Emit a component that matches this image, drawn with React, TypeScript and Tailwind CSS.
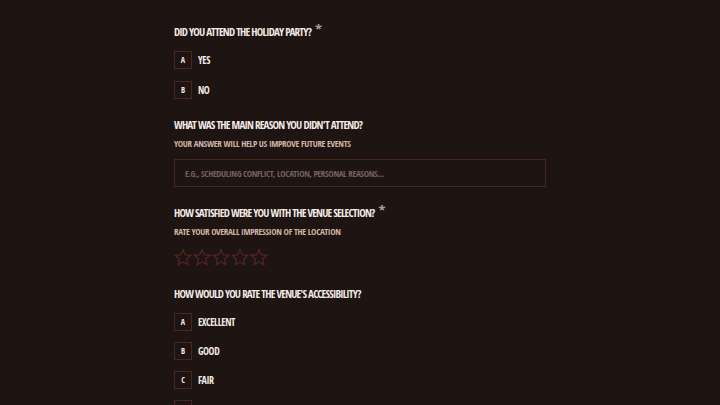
const FONT = { fontFamily: "'Open Sans Condensed', 'Roboto Condensed', 'DejaVu Sans Condensed', sans-serif" };

type Choice = { key: string; label: string };

function Heading({ children, required }: { children: React.ReactNode; required?: boolean }) {
  return (
    <h2 className="flex items-start text-[11px] leading-4 font-bold tracking-[-0.8px] text-[#f3ebe6]">
      <span>{children}</span>
      {required && <span className="ml-[4px] -mt-[3px] text-[15px] font-normal leading-4 text-[#a8a09c]">*</span>}
    </h2>
  );
}

function Hint({ children }: { children: React.ReactNode }) {
  return <p className="mt-[4px] text-[9px] leading-[14px] font-bold tracking-[-0.3px] text-[#d2b4a6]">{children}</p>;
}

function Choices({ items, gap }: { items: Choice[]; gap: string }) {
  return (
    <ul className={"mt-[11px] flex flex-col " + gap}>
      {items.map((c) => (
        <li key={c.key} className="flex items-center gap-[6px]">
          <span className="flex h-[18px] w-[18px] items-center justify-center border border-[#4a2621] text-[8px] font-bold text-[#f3ebe6]">
            {c.key}
          </span>
          <span className="text-[10px] font-bold tracking-[-0.4px] text-[#f3ebe6]">{c.label}</span>
        </li>
      ))}
    </ul>
  );
}

function StarIcon() {
  return (
    <svg width="18" height="19" viewBox="0 0 24 24" fill="none" stroke="#5b2622" strokeWidth="1.5" strokeLinejoin="miter">
      <polygon points="12,1.5 14.9,8.4 22.5,9.1 16.8,14.1 18.5,21.8 12,17.8 5.5,21.8 7.2,14.1 1.5,9.1 9.1,8.4" />
    </svg>
  );
}

export default function App() {
  return (
    <div className="min-h-screen bg-[#1e1412] uppercase" style={FONT}>
      <div className="mx-auto w-[372px] pt-[24px] pb-8">
        <section>
          <Heading required>Did you attend the holiday party?</Heading>
          <Choices
            gap="gap-[12px]"
            items={[
              { key: "A", label: "Yes" },
              { key: "B", label: "No" },
            ]}
          />
        </section>

        <section className="mt-[18px]">
          <Heading>What was the main reason you didn't attend?</Heading>
          <Hint>Your answer will help us improve future events</Hint>
          <input
            type="text"
            placeholder="E.G., SCHEDULING CONFLICT, LOCATION, PERSONAL REASONS..."
            className="mt-[8px] block h-[28px] w-full border border-[#4a2621] bg-transparent px-[10px] text-[9px] font-normal tracking-[-0.35px] text-[#f3ebe6] outline-none placeholder:text-[#76625c]"
            style={FONT}
          />
        </section>

        <section className="mt-[18px]">
          <Heading required>How satisfied were you with the venue selection?</Heading>
          <Hint>Rate your overall impression of the location</Hint>
          <div className="mt-[9px] flex gap-[1px]">
            {[0, 1, 2, 3, 4].map((i) => (
              <StarIcon key={i} />
            ))}
          </div>
        </section>

        <section className="mt-[19px]">
          <Heading>How would you rate the venue's accessibility?</Heading>
          <Choices
            gap="gap-[11px]"
            items={[
              { key: "A", label: "Excellent" },
              { key: "B", label: "Good" },
              { key: "C", label: "Fair" },
              { key: "D", label: "Poor" },
            ]}
          />
        </section>
      </div>
    </div>
  );
}
